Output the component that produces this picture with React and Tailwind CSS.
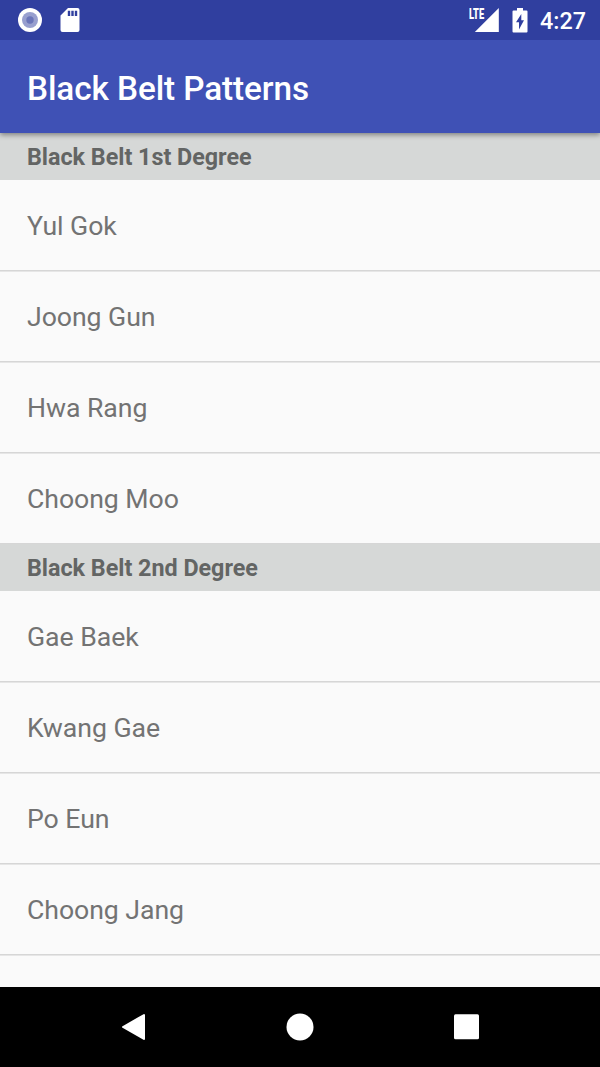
const sections = [
  { title: 'Black Belt 1st Degree', items: ['Yul Gok', 'Joong Gun', 'Hwa Rang', 'Choong Moo'] },
  { title: 'Black Belt 2nd Degree', items: ['Gae Baek', 'Kwang Gae', 'Po Eun', 'Choong Jang'] },
];

function StatusBar() {
  return (
    <div className="relative z-20 flex h-10 shrink-0 items-center bg-[#303f9f] pl-[18px] pr-[14px] text-white">
      <svg width="24" height="24" viewBox="0 0 24 24">
        <circle cx="12" cy="12" r="12" fill="#fff" />
        <circle cx="12" cy="12" r="8" fill="#989fcf" />
        <circle cx="12" cy="12" r="3.700" fill="#6b75b9" />
      </svg>
      <svg className="ml-[18px]" width="20" height="24" viewBox="0 0 20 24">
        <path fillRule="evenodd" fill="#fff" d="M8 0h9.500a2 2 0 0 1 2 2v20a2 2 0 0 1-2 2H2.500a2 2 0 0 1-2-2V7.500zM7.800 2.800v5.200h2.400v-5.200zM11.300 2.800v5.200h2.400v-5.200zM14.800 2.800v5.200h2.400v-5.200z" />
      </svg>
      <div className="ml-auto flex items-center">
        <div className="relative h-6 w-[30px]">
          <span className="absolute left-0 top-0 origin-left scale-x-[0.64] font-['Roboto'] text-[14.500px] font-black leading-[13px]">LTE</span>
          <svg className="absolute right-0 top-0" width="25" height="24" viewBox="0 0 25 24">
            <path d="M24.800 0v24H0.800z" fill="#fff" />
          </svg>
        </div>
        <svg className="ml-[13px]" width="16" height="25" viewBox="0 0 16 25">
          <path fillRule="evenodd" fill="#fff" d="M5 0h6v2.500h3.500q1 0 1 1v20q0 1-1 1h-13q-1 0-1-1v-20q0-1 1-1H5zM9.300 6L4 14.300h3V21.500l5-9.200H9.300z" />
        </svg>
        <span className="ml-[12px] mt-0.5 font-['Roboto'] text-[23.333px] font-medium leading-7">4:27</span>
      </div>
    </div>
  );
}

function Section({ title, items }) {
  return (
    <section>
      <h2 className="flex h-[47px] items-center bg-[#d6d8d7] pl-[27px] pt-0.5 text-[23.333px] font-bold tracking-[-0.02px] text-[#636564]">{title}</h2>
      <ul>
        {items.map((item) => (
          <li key={item} className="flex h-[91px] items-center border-b border-[#d6d6d6] pl-[27px] pt-px text-[26.667px] tracking-[-0.06px] text-[#737373] shadow-[0_1px_0_#e6e6e6]">
            {item}
          </li>
        ))}
      </ul>
    </section>
  );
}

function NavBar() {
  return (
    <nav className="flex h-20 shrink-0 items-center justify-center gap-[139px] bg-black">
      <svg width="28" height="28" viewBox="0 0 28 28">
        <path d="M25 2v24L4 14z" fill="#fff" stroke="#fff" strokeWidth="2" strokeLinejoin="round" />
      </svg>
      <svg width="28" height="28" viewBox="0 0 28 28">
        <circle cx="14" cy="14" r="13.500" fill="#fff" />
      </svg>
      <svg width="28" height="28" viewBox="0 0 28 28">
        <rect x="1" y="1.300" width="25" height="25" rx="1.500" fill="#fff" />
      </svg>
    </nav>
  );
}

export default function App() {
  return (
    <div className="flex h-[1067px] w-[600px] flex-col overflow-hidden bg-[#fafafa] font-['Roboto',sans-serif]">
      <StatusBar />
      <header className="z-10 flex h-[93px] shrink-0 items-center bg-[#3f51b5] pl-[27px] pt-[5px] shadow-[0_2px_5px_rgba(0,0,0,0.4)]">
        <h1 className="text-[33.333px] font-medium tracking-[-0.1px] text-white">Black Belt Patterns</h1>
      </header>
      <main className="min-h-0 flex-1 overflow-hidden">
        {sections.map((section) => (
          <Section key={section.title} {...section} />
        ))}
      </main>
      <NavBar />
    </div>
  );
}
